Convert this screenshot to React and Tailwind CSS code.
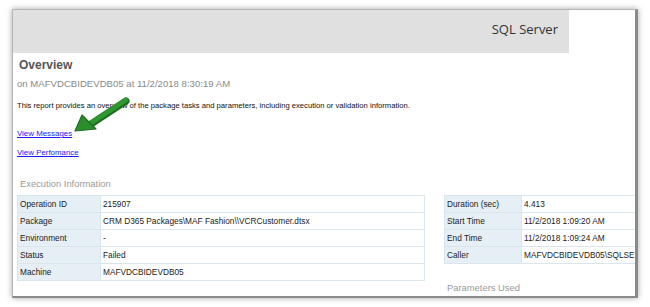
import React from 'react';

const execRows = [
  ['Operation ID', '215907'],
  ['Package', 'CRM D365 Packages\\MAF Fashion\\\\VCRCustomer.dtsx'],
  ['Environment', '-'],
  ['Status', 'Failed'],
  ['Machine', 'MAFVDCBIDEVDB05'],
];

const timeRows = [
  ['Duration (sec)', '4.413'],
  ['Start Time', '11/2/2018 1:09:20 AM'],
  ['End Time', '11/2/2018 1:09:24 AM'],
  ['Caller', 'MAFVDCBIDEVDB05\\SQLSERVERAGENT'],
];

const InfoTable = ({ rows, labelWidth, width }) => (
  <table className="shrink-0 border-collapse table-fixed" style={{ width }}>
    <tbody>
      {rows.map(([label, value]) => (
        <tr key={label} className="h-[17px]">
          <td
            className="border border-[#dbe5ec] bg-[#e6eff5] px-[2px] text-[8.3px] text-[#222] whitespace-nowrap overflow-hidden"
            style={{ width: labelWidth }}
          >
            {label}
          </td>
          <td className="border border-[#dbe5ec] bg-white px-[2px] text-[8.3px] text-[#222] whitespace-nowrap overflow-hidden">
            {value}
          </td>
        </tr>
      ))}
    </tbody>
  </table>
);

const App = () => {
  return (
    <div className="w-[650px] h-[307px] bg-white overflow-hidden font-['Liberation_Sans',Arial,sans-serif] pt-[9px] pl-[12px]">
      {/* report panel */}
      <div className="relative w-[626px] h-[289px] bg-white overflow-hidden border-l border-t border-[#b5b5b5] border-r-[3px] border-r-[#8a8a8a] border-b-[2px] border-b-[#8a8a8a] shadow-[0_0_6px_rgba(0,0,0,0.35)]">
        {/* header band */}
        <div className="w-[556px] h-[43px] bg-[#e0e0e0] flex items-center justify-end pr-[11px] pb-[4px]">
          <span className="font-['Open_Sans',sans-serif] text-[13px] text-[#333]">SQL Server</span>
        </div>

        <div className="pl-[4px]">
          <h1 className="mt-[4px] ml-[2px] text-[12px] font-bold text-[#555] leading-[16px]">Overview</h1>
          <p className="mt-[5px] text-[9.6px] text-[#8a8a8a] leading-[12px]">
            on MAFVDCBIDEVDB05 at 11/2/2018 8:30:19 AM
          </p>
          <p className="mt-[11px] text-[7.65px] text-[#111] leading-[10px] whitespace-nowrap">
            This report provides an overview of the package tasks and parameters, including execution or validation information.
          </p>
          <div className="mt-[18px] flex flex-col gap-[9px] text-[7.9px] leading-[10px]">
            <span className="text-[#1a1aff] underline">View Messages</span>
            <span className="text-[#1a1aff] underline">View Perfomance</span>
          </div>

          <p className="mt-[20px] ml-[3px] text-[9.4px] text-[#9a9a9a] leading-[12px]">Execution Information</p>

          <div className="mt-[5px] flex items-start">
            <InfoTable rows={execRows} labelWidth={83} width={408} />
            <div className="ml-[19px] flex flex-col shrink-0">
              <InfoTable rows={timeRows} labelWidth={77} width={200} />
              <p className="mt-[18px] ml-[3px] text-[9.4px] text-[#9a9a9a] leading-[12px]">Parameters Used</p>
            </div>
          </div>
        </div>

        {/* green callout arrow */}
        <svg className="absolute left-[58px] top-[86px]" width="62" height="42" viewBox="0 0 62 42">
          <path d="M55 5 L20 28" stroke="#1d6b1d" strokeWidth="7" strokeLinecap="round" />
          <path d="M55 4 L20 27" stroke="#2e982e" strokeWidth="4.5" strokeLinecap="round" />
          <path d="M4 35 L11 19 L25 33 Z" fill="#2a8f2a" stroke="#1d6b1d" strokeWidth="1.2" strokeLinejoin="round" />
        </svg>
      </div>
    </div>
  );
};

export default App;
